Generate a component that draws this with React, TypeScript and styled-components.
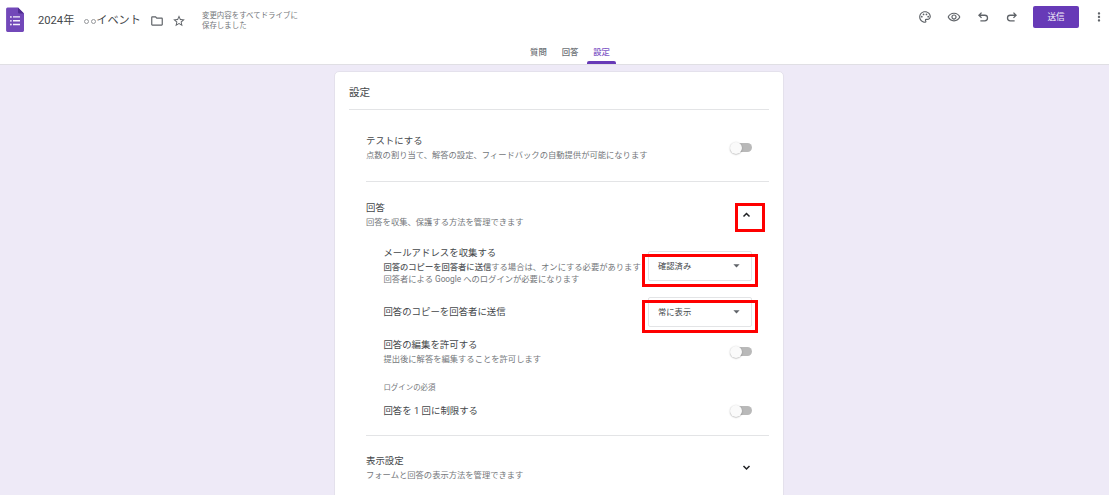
import React from 'react';
import styled, { createGlobalStyle } from 'styled-components';
import {
  MdArrowDropDown,
  MdMoreVert,
  MdOutlineFolder,
  MdOutlinePalette,
  MdOutlineRemoveRedEye,
  MdStarOutline,
} from 'react-icons/md';

const GlobalStyle = createGlobalStyle`
  * { box-sizing: border-box; }
  body {
    margin: 0;
    overflow: hidden;
    background: #eeeaf7;
    color: #44474a;
    font-family: Roboto, "Noto Sans CJK JP", sans-serif;
  }
`;

const Page = styled.div`
  height: 495px;
  overflow: hidden;
  background: #eeeaf7;
`;

const Header = styled.header`
  height: 65px;
  display: flex;
  flex-direction: column;
  justify-content: space-between;
  background: #fff;
  border-bottom: 1px solid #e0dfe4;
`;

const TopBar = styled.div`
  height: 40px;
  display: flex;
  align-items: flex-start;
  padding: 0 3px 0 6px;
`;

const Logo = styled.svg`
  display: block;
  margin-top: 7px;
  flex: none;
`;

const FileName = styled.div`
  margin: 13px 0 0 14px;
  width: 103px;
  display: flex;
  justify-content: space-between;
  font-size: 11.2px;
  line-height: 16px;
  white-space: nowrap;
`;

const Circles = styled.span`
  display: inline-flex;
  gap: 2px;
  vertical-align: 0;
`;

const Circle = styled.i`
  width: 5px;
  height: 5px;
  border: 1px solid #96989b;
  border-radius: 50%;
`;

const FileIcons = styled.div`
  display: flex;
  gap: 8px;
  margin: 14px 0 0 9px;
  color: #5f6368;
  svg { display: block; }
`;

const SaveState = styled.div`
  margin: 11px 0 0 16px;
  color: #74777b;
  font-size: 7.45px;
  line-height: 9.6px;
  white-space: nowrap;
`;

const Tools = styled.div`
  display: flex;
  align-items: center;
  margin: 6px 0 0 auto;
  height: 22px;
  color: #5f6368;
  svg { display: block; }
`;

const ToolIcons = styled.div`
  display: flex;
  gap: 15px;
  margin-right: 14px;
`;

const SendButton = styled.button`
  width: 46px;
  height: 22px;
  padding: 0;
  border: 0;
  border-radius: 2px;
  background: #673ab7;
  color: #f1ecf8;
  font: 400 8.6px/22px Roboto, "Noto Sans CJK JP", sans-serif;
  margin-right: 13px;
`;

const Tabs = styled.nav`
  display: flex;
  justify-content: center;
  gap: 3px;
  padding-left: 31px;
`;

const Tab = styled.div<{ $active?: boolean }>`
  position: relative;
  width: 28.6px;
  height: 24px;
  text-align: center;
  font-size: 8.4px;
  font-weight: 500;
  line-height: 24px;
  color: ${({ $active }) => ($active ? '#8159c6' : '#6b6f74')};
  &::after {
    content: '';
    display: ${({ $active }) => ($active ? 'block' : 'none')};
    position: absolute;
    left: 0;
    right: 0;
    bottom: 0;
    height: 3px;
    border-radius: 2px 2px 0 0;
    background: #673ab7;
  }
`;

const Card = styled.main`
  width: 450px;
  height: 440px;
  margin: 6px 0 0 334px;
  padding: 0 14px;
  background: #fff;
  border: 1px solid #e4e1ec;
  border-radius: 5px;
`;

const CardTitle = styled.h1`
  height: 38px;
  margin: 0;
  padding-top: 13px;
  border-bottom: 1px solid #e3e4e6;
  font-size: 10.6px;
  font-weight: 400;
  line-height: 16px;
`;

const Section = styled.section<{ $height: number; $top: number }>`
  height: ${({ $height }) => $height}px;
  margin-left: 17px;
  padding-top: ${({ $top }) => $top}px;
  border-bottom: 1px solid #e3e4e6;
`;

const Row = styled.div<{ $height: number; $inset?: boolean }>`
  height: ${({ $height }) => $height}px;
  margin-left: ${({ $inset }) => ($inset ? 17.4 : 0)}px;
  display: flex;
  justify-content: space-between;
  align-items: flex-start;
`;

const Copy = styled.div`
  white-space: nowrap;
`;

const Label = styled.div`
  font-size: 9.42px;
  line-height: 14px;
  padding-top: 4px;
`;

const Description = styled.div`
  color: #74777b;
  font-size: 8.3px;
  line-height: 12px;
  padding-top: 1px;
  & + & { padding-top: 0; }
  b { font-weight: 500; color: #55585c; }
`;

const Caption = styled.div`
  height: 19px;
  margin-left: 17.4px;
  color: #74777b;
  font-size: 7.45px;
  line-height: 14px;
`;

const Switch = styled.div<{ $top: number }>`
  width: 22px;
  height: 11px;
  margin: ${({ $top }) => $top}px 17px 0 0;
  display: flex;
  align-items: center;
  flex: none;
  &::before {
    content: '';
    width: 12px;
    height: 12px;
    flex: none;
    border-radius: 50%;
    background: #fafafa;
    box-shadow: 0 0.5px 1.5px rgba(0, 0, 0, 0.35);
    z-index: 1;
  }
  &::after {
    content: '';
    width: 17px;
    height: 9px;
    flex: none;
    margin-left: -7px;
    border-radius: 5px;
    background: #b9b9b9;
  }
`;

const Toggle = styled.div<{ $top: number }>`
  position: relative;
  width: 12px;
  height: 12px;
  margin: ${({ $top }) => $top}px 17px 0 0;
  color: #202124;
  svg { display: block; }
`;

const Select = styled.div<{ $top: number }>`
  position: relative;
  flex: none;
  width: 104px;
  height: 30px;
  margin: ${({ $top }) => $top}px 17px 0 0;
  padding: 0 7px 1px 9px;
  display: flex;
  justify-content: space-between;
  align-items: center;
  border: 1px solid #e3e4e6;
  border-radius: 2px;
  font-size: 8.3px;
  line-height: 12px;
  svg { color: #5f6368; }
`;

const Highlight = styled.span<{ $x: number; $y: number; $w: number; $h: number }>`
  position: absolute;
  left: ${({ $x }) => $x}px;
  top: ${({ $y }) => $y}px;
  width: ${({ $w }) => $w}px;
  height: ${({ $h }) => $h}px;
  border: 3px solid #fe0000;
`;

const UndoIcon = ({ flip = false }: { flip?: boolean }) => (
  <svg width="14" height="14" viewBox="0 0 24 24" fill="none" stroke="currentColor" strokeWidth="2.2">
    <g transform={flip ? 'matrix(-1 0 0 1 24 0)' : undefined}>
      <path d="M9.500 4.500 5 9l4.500 4.500M5.500 9H15a4.750 4.750 0 0 1 0 9.500H7.500" />
    </g>
  </svg>
);

const Chevron = ({ up = false }: { up?: boolean }) => (
  <svg width="13" height="12" viewBox="0 0 13 12" fill="none" stroke="currentColor" strokeWidth="1.5">
    <path d={up ? 'M3.500 7.500l3-3 3 3' : 'M3.500 5l3 3 3-3'} />
  </svg>
);

export default function App() {
  return (
    <>
      <GlobalStyle />
      <Page>
        <Header>
          <TopBar>
            <Logo width="18" height="25" viewBox="0 0 18 25">
              <path d="M1.5.5H12l6 6V23.500a1.400 1.400 0 0 1-1.400 1.400H1.500A1.400 1.400 0 0 1 .1 23.500V2A1.500 1.500 0 0 1 1.500.5Z" fill="#7248b9" />
              <path d="M12 .5l6 6h-4.600A1.400 1.400 0 0 1 12 5Z" fill="#4f2c91" />
              <g fill="#f4effb">
                <circle cx="4.900" cy="9.900" r=".9" />
                <circle cx="4.900" cy="13.800" r=".9" />
                <circle cx="4.900" cy="17.500" r=".9" />
                <path d="M7 9.200h7v1.400H7zM7 13.100h7v1.400H7zM7 16.800h7v1.400H7z" />
              </g>
            </Logo>
            <FileName>
              <span>2024年</span>
              <span>
                <Circles><Circle /><Circle /></Circles>イベント
              </span>
            </FileName>
            <FileIcons>
              <MdOutlineFolder size={14} />
              <MdStarOutline size={14} />
            </FileIcons>
            <SaveState>
              変更内容をすべてドライブに
              <br />
              保存しました
            </SaveState>
            <Tools>
              <ToolIcons>
                <MdOutlinePalette size={14} />
                <MdOutlineRemoveRedEye size={14} />
                <UndoIcon />
                <UndoIcon flip />
              </ToolIcons>
              <SendButton>送信</SendButton>
              <MdMoreVert size={14} />
            </Tools>
          </TopBar>
          <Tabs>
            <Tab>質問</Tab>
            <Tab>回答</Tab>
            <Tab $active>設定</Tab>
          </Tabs>
        </Header>
        <Card>
          <CardTitle>設定</CardTitle>
          <Section $height={72} $top={20}>
            <Row $height={50}>
              <Copy>
                <Label>テストにする</Label>
                <Description>点数の割り当て、解答の設定、フィードバックの自動提供が可能になります</Description>
              </Copy>
              <Switch $top={12} />
            </Row>
          </Section>
          <Section $height={254} $top={15}>
            <Row $height={45}>
              <Copy>
                <Label>回答</Label>
                <Description>回答を収集、保護する方法を管理できます</Description>
              </Copy>
              <Toggle $top={12}>
                <Chevron up />
                <Highlight $x={-5} $y={-6} $w={30} $h={29} />
              </Toggle>
            </Row>
            <Row $height={59} $inset>
              <Copy>
                <Label>メールアドレスを収集する</Label>
                <Description><b>回答のコピーを回答者に送信</b>する場合は、オンにする必要があります</Description>
                <Description>回答者による Google へのログインが必要になります</Description>
              </Copy>
              <Select $top={9}>
                確認済み
                <MdArrowDropDown size={15} />
                <Highlight $x={-7} $y={2} $w={116} $h={33} />
              </Select>
            </Row>
            <Row $height={33} $inset>
              <Copy>
                <Label>回答のコピーを回答者に送信</Label>
              </Copy>
              <Select $top={-4}>
                常に表示
                <MdArrowDropDown size={15} />
                <Highlight $x={-7} $y={2} $w={116} $h={33} />
              </Select>
            </Row>
            <Row $height={47} $inset>
              <Copy>
                <Label>回答の編集を許可する</Label>
                <Description>提出後に解答を編集することを許可します</Description>
              </Copy>
              <Switch $top={12} />
            </Row>
            <Caption>ログインの必須</Caption>
            <Row $height={30} $inset>
              <Copy>
                <Label>回答を 1 回に制限する</Label>
              </Copy>
              <Switch $top={5} />
            </Row>
          </Section>
          <Section $height={100} $top={14}>
            <Row $height={50}>
              <Copy>
                <Label>表示設定</Label>
                <Description>フォームと回答の表示方法を管理できます</Description>
              </Copy>
              <Toggle $top={11}>
                <Chevron />
              </Toggle>
            </Row>
          </Section>
        </Card>
      </Page>
    </>
  );
}
